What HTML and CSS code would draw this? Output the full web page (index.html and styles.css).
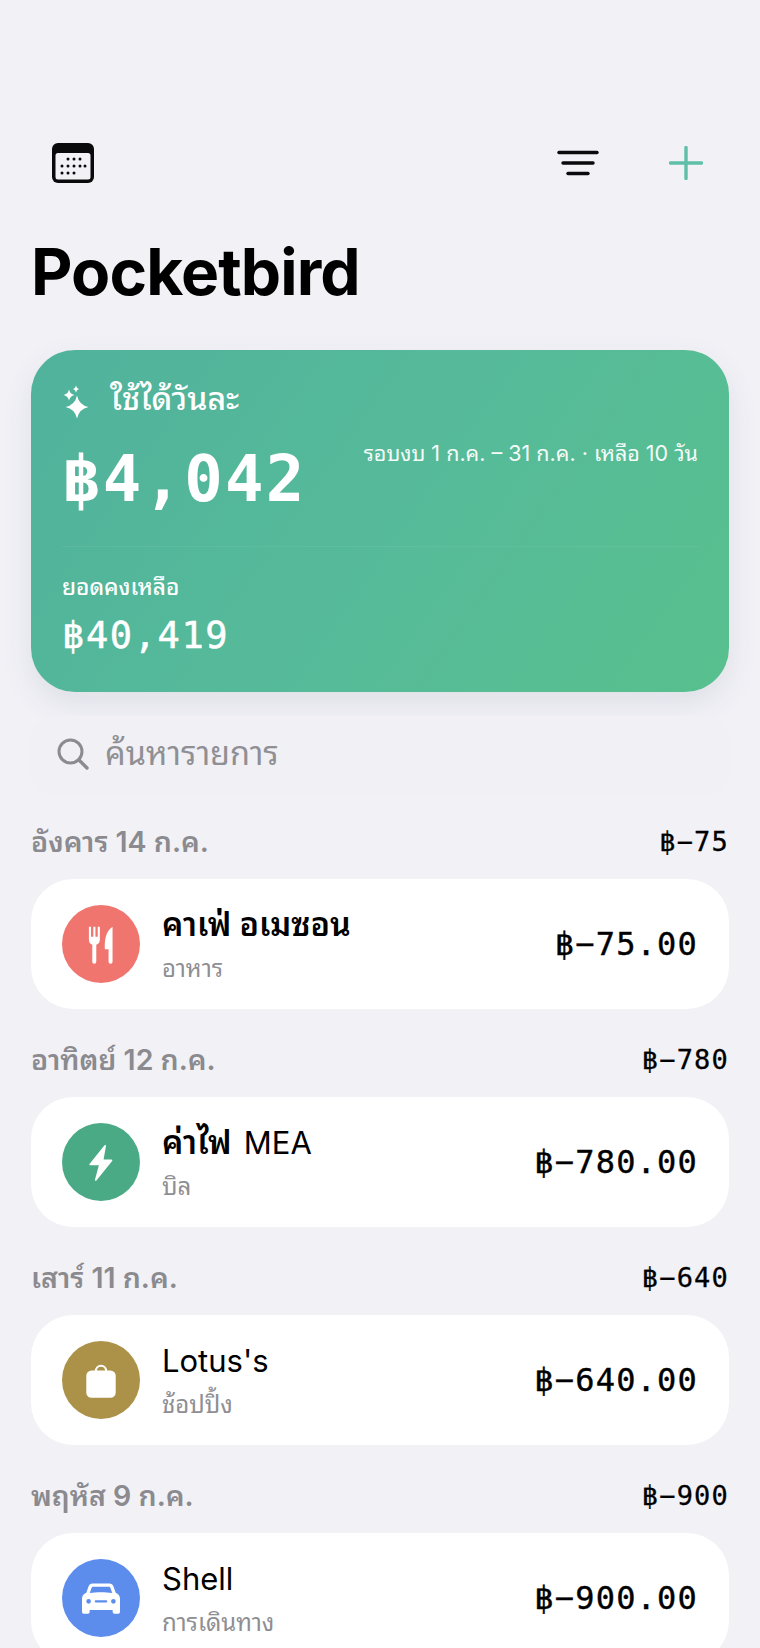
FILE: index.html
```html
<!DOCTYPE html>
<html lang="th">
<head>
<meta charset="utf-8">
<title>Pocketbird</title>
<link rel="stylesheet" href="styles.css">
</head>
<body>
<main class="page">
  <header class="toolbar">
    <svg class="ico-cal" viewBox="0 0 42 40" aria-hidden="true">
      <rect width="42" height="40" rx="6" fill="#0a0a0c"/>
      <rect x="3.500" y="10" width="35" height="26.500" rx="2.500" fill="#f1f1f6"/>
      <g fill="#0a0a0c">
        <circle cx="16" cy="16" r="1.500"/><circle cx="22" cy="16" r="1.500"/><circle cx="28" cy="16" r="1.500"/>
        <circle cx="10" cy="23" r="1.500"/><circle cx="16" cy="23" r="1.500"/><circle cx="22" cy="23" r="1.500"/><circle cx="28" cy="23" r="1.500"/><circle cx="33" cy="23" r="1.500"/>
        <circle cx="10" cy="30" r="1.500"/><circle cx="16" cy="30" r="1.500"/><circle cx="22" cy="30" r="1.500"/>
      </g>
    </svg>
    <svg class="ico-filter" viewBox="0 0 42 26" aria-hidden="true">
      <g stroke="#0a0a0c" stroke-width="3.400" stroke-linecap="round">
        <path d="M2 2.500H40"/><path d="M6 13H36"/><path d="M11 23.500H31"/>
      </g>
    </svg>
    <svg class="ico-plus" viewBox="0 0 34 34" aria-hidden="true">
      <path d="M17 1.500V32.500M1.500 17H32.500" stroke="#5fbfa8" stroke-width="3.400" stroke-linecap="round"/>
    </svg>
  </header>

  <h1 class="title">Pocketbird</h1>

  <section class="hero">
    <div class="hero-head">
      <svg class="ico-spark" viewBox="0 0 30 35" aria-hidden="true">
        <path fill="#fff" d="M15 11.500Q17 21 26.500 23Q17 25 15 34.500Q13 25 3.500 23Q13 21 15 11.500z"/>
        <path fill="#fff" d="M7 5.500Q8 10 12.500 11Q8 12 7 16.500Q6 12 1.500 11Q6 10 7 5.500z"/>
        <path fill="#fff" d="M14 1.500Q14.500 4.500 17 5Q14.500 5.500 14 8.500Q13.500 5.500 11 5Q13.500 4.500 14 1.500z"/>
      </svg>
      <span class="hero-label">ใช้ได้วันละ</span>
    </div>
    <div class="hero-main">
      <span class="hero-amount">฿4,042</span>
      <span class="hero-range">รอบงบ 1 ก.ค. – 31 ก.ค. · เหลือ 10 วัน</span>
    </div>
    <div class="hero-divider"></div>
    <div class="hero-sub">ยอดคงเหลือ</div>
    <div class="hero-balance">฿40,419</div>
  </section>

  <div class="search">
    <svg class="ico-search" viewBox="0 0 32 32" aria-hidden="true">
      <circle cx="13.500" cy="13.500" r="11.500" fill="none" stroke="#8b8b90" stroke-width="3"/>
      <path d="M22 22L30 30" stroke="#8b8b90" stroke-width="3.400" stroke-linecap="round"/>
    </svg>
    <span class="search-text">ค้นหารายการ</span>
  </div>

  <section class="group">
    <div class="group-head"><span class="group-date">อังคาร 14 ก.ค.</span><span class="group-sum">฿−75</span></div>
    <article class="row">
      <div class="avatar avatar-food">
        <svg class="ico-row" viewBox="0 0 40 40" aria-hidden="true">
          <path fill="#fff" d="M8.500 3.500h2v9.500h2.200v-9.500h2v9.500h2.200v-9.500h2v12.500c0 2.600-1.300 4-3.400 4.600v16.400a1.900 1.900 0 0 1-3.800 0v-16.400c-2-.6-3.200-2-3.200-4.600z"/>
          <path fill="#fff" d="M31 3.500v33.500a1.900 1.900 0 0 1-3.800 0v-12h-3.500c-.5-7 .5-17.500 7.300-21.500z"/>
        </svg>
      </div>
      <div class="row-text"><div class="row-name row-name-bold">คาเฟ่ อเมซอน</div><div class="row-cat">อาหาร</div></div>
      <div class="row-amount">฿−75.00</div>
    </article>
  </section>

  <section class="group">
    <div class="group-head"><span class="group-date">อาทิตย์ 12 ก.ค.</span><span class="group-sum">฿−780</span></div>
    <article class="row">
      <div class="avatar avatar-bill">
        <svg class="ico-row" viewBox="0 0 40 40" aria-hidden="true">
          <path fill="#fff" stroke="#fff" stroke-width="1.600" stroke-linejoin="round" d="M24 4.500L9.700 22.300H19L15 37L30 18.500H21.500z"/>
        </svg>
      </div>
      <div class="row-text"><div class="row-name row-name-bold">ค่าไฟ <span class="latin-regular">MEA</span></div><div class="row-cat">บิล</div></div>
      <div class="row-amount">฿−780.00</div>
    </article>
  </section>

  <section class="group">
    <div class="group-head"><span class="group-date">เสาร์ 11 ก.ค.</span><span class="group-sum">฿−640</span></div>
    <article class="row">
      <div class="avatar avatar-shop">
        <svg class="ico-row" viewBox="0 0 40 40" aria-hidden="true">
          <path fill="none" stroke="#fff" stroke-width="2" d="M15 12c0-7.500 10-7.500 10 0"/>
          <rect x="6" y="11" width="28" height="26" rx="5" fill="#fff"/>
        </svg>
      </div>
      <div class="row-text"><div class="row-name">Lotus's</div><div class="row-cat">ช้อปปิ้ง</div></div>
      <div class="row-amount">฿−640.00</div>
    </article>
  </section>

  <section class="group">
    <div class="group-head"><span class="group-date">พฤหัส 9 ก.ค.</span><span class="group-sum">฿−900</span></div>
    <article class="row">
      <div class="avatar avatar-car">
        <svg class="ico-row" viewBox="0 0 40 40" aria-hidden="true">
          <path fill="#fff" fill-rule="evenodd" d="M12 6.200H28c2 0 3 .8 3.800 2.600l2.200 6.200c2.500 1 4.100 3 4.100 5.700V33.300a1.700 1.700 0 0 1-1.700 1.700h-3.600a1.700 1.700 0 0 1-1.700-1.700V31.500H9.200V33.300a1.700 1.700 0 0 1-1.700 1.700H3.600a1.700 1.700 0 0 1-1.700-1.700V20.700c0-2.700 1.600-4.700 4.100-5.700l2.200-6.200C9 7 10 6.200 12 6.200zM12.800 9.200c-.9 0-1.500.5-1.800 1.300L9.300 15.300c3-.5 7-.8 10.700-.8s7.700.3 10.700.8L29 10.500c-.3-.8-.9-1.300-1.800-1.300zM8.200 21a2.200 2.200 0 1 0 0 4.400a2.200 2.200 0 0 0 0-4.400zM31.800 21a2.200 2.200 0 1 0 0 4.400a2.200 2.200 0 0 0 0-4.400zM15 22.200a1 1 0 0 0 0 2h10a1 1 0 0 0 0-2z"/>
        </svg>
      </div>
      <div class="row-text"><div class="row-name">Shell</div><div class="row-cat">การเดินทาง</div></div>
      <div class="row-amount">฿−900.00</div>
    </article>
  </section>
</main>
</body>
</html>
```
FILE: styles.css
```css
* { box-sizing: border-box; }
html, body { margin: 0; height: 100%; }
body {
  background: #f1f1f6;
  color: #000;
  font-family: Inter, "Noto Sans Thai Looped", Thonburi, Loma, "Noto Sans Thai", "Noto Sans", sans-serif;
  overflow: hidden;
}
.page { padding: 143px 31px 0; height: 1648px; overflow: hidden; }

.toolbar { display: flex; align-items: center; height: 40px; padding: 0 26px 0 21px; }
.ico-cal { width: 42px; height: 40px; }
.ico-filter { width: 42px; height: 26px; margin-left: auto; }
.ico-plus { width: 34px; height: 34px; margin-left: 70px; }

.title { margin: 50px 0 0; font-size: 64px; line-height: 78px; font-weight: 700; letter-spacing: -.9px; height: 117px; }

.hero {
  height: 342px;
  border-radius: 44px;
  padding: 26px 31px 0;
  color: #fff;
  background: linear-gradient(125deg, #50b29c 0%, #56bb99 55%, #58c08e 100%);
  box-shadow: 0 12px 30px rgba(70, 80, 110, .10);
}
.hero-head { display: flex; align-items: center; gap: 18px; height: 50px; }
.ico-spark { width: 30px; height: 35px; }
.hero-label { font-size: 32px; line-height: 44px; font-weight: 500; margin-bottom: 4px; }
.hero-main { display: flex; justify-content: space-between; align-items: flex-start; margin-top: 4px; height: 90px; }
.hero-amount { font-family: "DejaVu Sans Mono", monospace; font-weight: 700; font-size: 64px; line-height: 90px; letter-spacing: 2.200px; margin-top: 4px; }
.hero-range { font-size: 21.500px; line-height: 28px; margin-top: 9px; opacity: .95; }
.hero-divider { height: 1px; background: rgba(255,255,255,.06); margin-top: 26px; }
.hero-sub { margin-top: 20px; font-size: 22.500px; line-height: 40px; font-weight: 500; }
.hero-balance { font-family: "DejaVu Sans Mono", monospace; font-size: 37px; line-height: 50px; letter-spacing: 1.600px; margin-top: 4px; -webkit-text-stroke: .5px #fff; }

.search { display: flex; align-items: center; gap: 16px; height: 78px; margin-top: 24px; padding: 0 26px; background: #f0f0f5; border-radius: 22px; }
.ico-search { width: 32px; height: 32px; margin-bottom: 2px; }
.search-text { font-size: 32.500px; line-height: 42px; padding-bottom: 2px; color: #8f8f94; }

.group { height: 218px; }
.group-head { display: flex; justify-content: space-between; align-items: center; height: 85px; padding-top: 11px; }
.group-date { font-size: 28.500px; line-height: 36px; font-weight: 600; color: #8a8a8f; }
.group-sum { font-family: "DejaVu Sans Mono", monospace; font-size: 27px; line-height: 36px; letter-spacing: 1.200px; -webkit-text-stroke: .3px #000; }

.row { display: flex; align-items: center; height: 130px; padding: 0 31px; background: #fff; border-radius: 42px; }
.avatar { width: 78px; height: 78px; border-radius: 50%; display: flex; align-items: center; justify-content: center; flex: none; }
.avatar-food { background: #f0756f; }
.avatar-bill { background: #4aaa86; }
.avatar-shop { background: #ac9248; }
.avatar-car { background: #5c8cec; }
.ico-row { width: 42px; height: 42px; }
.row-text { margin-left: 22px; flex: 1; }
.row-name { font-size: 31px; line-height: 42px; }
.row-name-bold { font-size: 32.300px; font-weight: 600; }
.latin-regular { font-size: 31px; font-weight: 400; margin-left: 4px; }
.row-cat { font-size: 24px; line-height: 32px; color: #8e8e93; margin-top: 7px; }
.row-amount { font-family: "DejaVu Sans Mono", monospace; font-size: 32px; letter-spacing: 1.200px; -webkit-text-stroke: .4px #000; }
```
